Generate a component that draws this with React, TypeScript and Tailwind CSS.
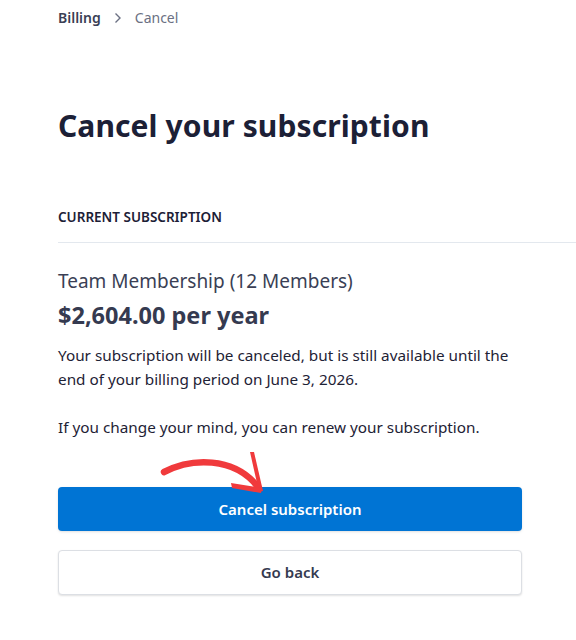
import React from 'react';

const font = { fontFamily: '"Noto Sans", "Open Sans", sans-serif' };

function CurvedArrow() {
  return (
    <svg
      className="absolute left-[98px] top-[-40px] pointer-events-none"
      width="120"
      height="50"
      viewBox="150 446 120 50"
      fill="none"
    >
      <path
        d="M158 471 C 185 457, 228 455, 252 486"
        stroke="#f03a3c"
        strokeWidth="6.5"
        strokeLinecap="round"
      />
      <path d="M244 451 L248 451 L257 490 L253 491 Z" fill="#f03a3c" />
      <path d="M225 482 L256 487 L255 492 L226 487 Z" fill="#f03a3c" />
    </svg>
  );
}

export default function App() {
  return (
    <div className="min-h-[640px] bg-white overflow-hidden text-[#1e2235]" style={font}>
      <nav className="pl-[58px] pt-[8px] flex items-center gap-[12px] text-[14px] leading-[20px]">
        <span className="font-semibold text-[#3a3f55]">Billing</span>
        <svg width="10" height="12" viewBox="0 0 10 12" fill="none">
          <path d="M2.5 1.5 L7 6 L2.5 10.5" stroke="#6b7083" strokeWidth="1.4" />
        </svg>
        <span className="text-[#6b7083]">Cancel</span>
      </nav>

      <main className="pl-[58px]">
        <h1 className="mt-[78px] text-[30px] leading-[40px] font-bold tracking-[0.1px] text-[#1c2036]">
          Cancel your subscription
        </h1>

        <section className="mt-[62px]">
          <h2 className="text-[13.5px] leading-[18px] font-semibold uppercase text-[#1c2036]">
            Current subscription
          </h2>
          <div className="mt-[16px] h-px bg-[#e3e8ee] mr-[-2px]" />

          <div className="w-[464px]">
            <p className="mt-[25px] text-[19px] leading-[26px] text-[#3a3f55]">Team Membership (12 Members)</p>
            <p className="mt-[6px] text-[23.5px] leading-[30px] font-bold text-[#353a50]">$2,604.00 per year</p>

            <p className="mt-[13px] text-[15.3px] leading-[24px] text-[#1e2235]">
              Your subscription will be canceled, but is still available until the end of your billing period on
              June 3, 2026.
            </p>
            <p className="mt-[24px] text-[15.3px] leading-[24px] text-[#1e2235]">
              If you change your mind, you can renew your subscription.
            </p>

            <div className="relative mt-[48px]">
              <CurvedArrow />
              <button className="w-full h-[44px] rounded-[4px] bg-[#0074d4] text-white text-[15px] font-semibold shadow-sm">
                Cancel subscription
              </button>
            </div>
            <button className="mt-[19px] w-full h-[45px] rounded-[4px] bg-white border border-[#dcdfe4] text-[#353a50] text-[15px] font-semibold shadow-[0_1px_2px_rgba(0,0,0,0.12)]">
              Go back
            </button>
          </div>
        </section>
      </main>
    </div>
  );
}
